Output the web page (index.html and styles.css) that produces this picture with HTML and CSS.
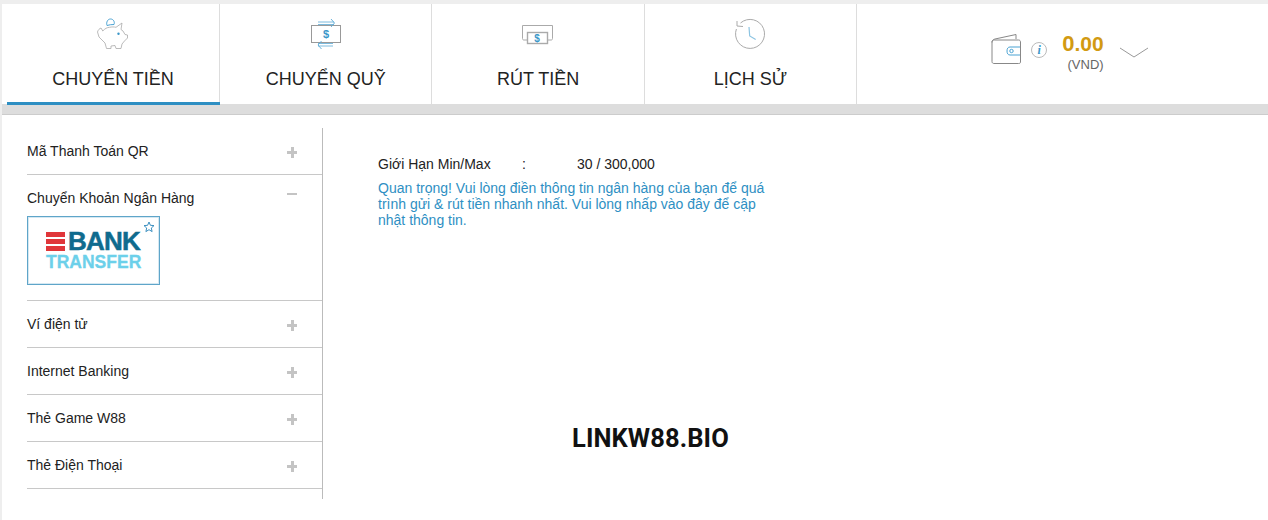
FILE: index.html
```html
<!DOCTYPE html>
<html lang="vi">
<head>
    <meta charset="UTF-8">
    <meta name="viewport" content="width=device-width, initial-scale=1.0">
    <title>Chuyển Tiền</title>
    <link rel="stylesheet" href="styles.css">
</head>
<body>
<div class="page">
    <!-- Top tabs -->
    <div class="topbar">
        <a class="tab tab-first active">
            <svg class="tab-icon" width="34" height="34" viewBox="0 0 34 34" fill="none">
                <path d="M1.500 15C2 13 3.500 11.500 5 11L6.800 14C9 11.500 11 10.500 13.500 10.300C16 9.800 18 9.800 20 10.300L26 6L25 12.500L27 14L29 17.500L31.500 18V21L28.500 24L26 27L25 31.500H20L19 28.500L15 29L15 31.500H10.500L9 26L3 20Z" stroke="#aaa" stroke-width="0.800" stroke-linejoin="round"/>
                <path d="M11 8.500C10 5.500 11.500 2 14.500 2C17.500 2 19 5 18 7.500C15.500 7.500 13 7.800 11 8.500Z" stroke="#4ba3d3"/>
                <circle cx="22.500" cy="16.700" r="1.200" fill="#3b97c9"/>
            </svg>
            <span>CHUYỂN TIỀN</span>
        </a>
        <a class="tab">
            <svg class="tab-icon" width="34" height="34" viewBox="0 0 34 34" fill="none">
                <rect x="2.500" y="8.500" width="29" height="17" fill="#fff" stroke="#999"/>
                <path d="M9 5H25M9 7.500H25" stroke="#5aaad6" stroke-width="0.800"/>
                <path d="M22 2L25.500 6L22 10" stroke="#5aaad6" stroke-width="0.900"/>
                <path d="M9 26.500H24M9 29H24" stroke="#5aaad6" stroke-width="0.800"/>
                <path d="M12.500 24L9 28L12.500 32" stroke="#5aaad6" stroke-width="0.900"/>
                <text x="17" y="21" class="icon-dollar" text-anchor="middle">$</text>
            </svg>
            <span>CHUYỂN QUỸ</span>
        </a>
        <a class="tab">
            <svg class="tab-icon" width="34" height="34" viewBox="0 0 34 34" fill="none">
                <path d="M6 23H3C2 23 1.500 22.500 1.500 21.500V8.500H31.500V21.500C31.500 22.500 31 23 30 23H27" stroke="#aaa"/>
                <rect x="6.500" y="15.500" width="20" height="11" stroke="#aaa" stroke-width="1.400"/>
                <text x="16" y="25" class="icon-dollar icon-dollar-small" text-anchor="middle">$</text>
            </svg>
            <span>RÚT TIỀN</span>
        </a>
        <a class="tab">
            <svg class="tab-icon" width="34" height="34" viewBox="0 0 34 34" fill="none">
                <path d="M7.500 6A14.500 14.500 0 1 1 3.400 12" stroke="#aaa"/>
                <path d="M4 4V9L10 9.500" stroke="#aaa"/>
                <path d="M16 10L16.700 19L22.700 22.500" stroke="#8cc4e2" stroke-width="1.200"/>
            </svg>
            <span>LỊCH SỬ</span>
        </a>
        <div class="balance">
            <svg class="wallet" width="32" height="32" viewBox="0 0 32 32" fill="none">
                <path d="M2 9.500C2 7.500 3 6.500 5 6L26 1.500V6" stroke="#888"/>
                <path d="M2 9C2 7.500 3 7 4.500 7H28.500C30 7 30.500 8 30.500 9V29C30.500 30 30 30.500 28.500 30.500H4C3 30.500 2 30 2 28.500Z" stroke="#888"/>
                <path d="M30 14H20C18 14 17 15.500 17 18C17 20.500 18 22 20 22H30" stroke="#4ba3d3"/>
                <circle cx="21.500" cy="18" r="1.700" stroke="#4ba3d3"/>
            </svg>
            <span class="info-icon">i</span>
            <div class="amount">
                <strong>0<small>.00</small></strong>
                <span>(VND)</span>
            </div>
            <svg class="chevron" width="30" height="12" viewBox="0 0 30 12" fill="none">
                <path d="M1 1L15 10L29 1" stroke="#999"/>
            </svg>
        </div>
    </div>
    <div class="band"></div>

    <div class="content">
        <!-- Payment methods -->
        <ul class="methods">
            <li class="method"><span>Mã Thanh Toán QR</span><i class="plus"></i></li>
            <li class="method method-open">
                <div class="method-head"><span>Chuyển Khoản Ngân Hàng</span><i class="minus"></i></div>
                <div class="bank-logo">
                    <svg class="logo-star" width="12" height="12" viewBox="0 0 12 12" fill="none">
                        <path d="M6 1L7.400 4.300L11 4.600L8.300 7L9.100 10.600L6 8.700L2.900 10.600L3.700 7L1 4.600L4.600 4.300Z" stroke="#3b8fc0"/>
                    </svg>
                    <div class="logo-top">
                        <div class="logo-bars"><b></b><b></b><b></b></div>
                        <span>BANK</span>
                    </div>
                    <div class="logo-bottom">TRANSFER</div>
                </div>
            </li>
            <li class="method"><span>Ví điện tử</span><i class="plus"></i></li>
            <li class="method"><span>Internet Banking</span><i class="plus"></i></li>
            <li class="method"><span>Thẻ Game W88</span><i class="plus"></i></li>
            <li class="method"><span>Thẻ Điện Thoại</span><i class="plus"></i></li>
        </ul>

        <div class="detail">
            <div class="limit">
                <span class="limit-label">Giới Hạn Min/Max</span>
                <span class="limit-colon">:</span>
                <span>30 / 300,000</span>
            </div>
            <p class="notice">Quan trọng! Vui lòng điền thông tin ngân hàng của bạn để quá trình gửi &amp; rút tiền nhanh nhất. Vui lòng nhấp vào đây để cập nhật thông tin.</p>
            <div class="watermark">LINKW88.BIO</div>
        </div>
    </div>
</div>
</body>
</html>
```

FILE: styles.css
```css
* {
    box-sizing: border-box;
}
html, body {
    height: 100%;
}
body {
    margin: 0;
    padding: 4px 0 0 2px;
    background-color: #eee;
    font-family: 'Liberation Sans', Arial, sans-serif;
    font-size: 14px;
    color: #222;
    overflow: hidden;
}
.page {
    background: #fff;
    height: 516px;
}
.topbar {
    display: flex;
    height: 100px;
}
.tab {
    width: 212.4px;
    border-right: 1px solid #ddd;
    display: flex;
    flex-direction: column;
    align-items: center;
    padding-top: 13px;
    font-size: 18px;
    color: #222;
    position: relative;
}
.tab-first {
    width: 218px;
    padding-left: 5px;
}
.tab span {
    margin-top: 18px;
}
.tab.active::after {
    content: "";
    position: absolute;
    left: 5px;
    right: -1px;
    bottom: -1px;
    height: 3px;
    background-color: #2e8fc3;
}
.tab-icon {
    display: block;
}
.icon-dollar {
    font-size: 11px;
    font-weight: bold;
    fill: #3b97c9;
}
.icon-dollar-small {
    font-size: 10px;
}
.balance {
    flex: 1;
    display: flex;
    align-items: flex-start;
    padding: 29px 0 0 133px;
}
.wallet {
    margin-right: 9px;
}
.info-icon {
    width: 16px;
    height: 16px;
    margin: 9px 15px 0 0;
    border: 1px solid #bbb;
    border-radius: 50%;
    font: italic bold 12px/14px 'Liberation Serif', serif;
    text-align: center;
    color: #3b97c9;
}
.amount {
    display: flex;
    flex-direction: column;
    align-items: flex-end;
    line-height: 1;
}
.amount strong {
    font-size: 22px;
    color: #d29a12;
}
.amount small {
    font-size: 21px;
}
.amount span {
    margin-top: 3px;
    font-size: 13px;
    color: #666;
}
.chevron {
    margin: 14px 0 0 15px;
}
.band {
    height: 11px;
    background-color: #ddd;
    border-bottom: 1px solid #ccc;
}
.content {
    display: flex;
    padding: 13px 0 0 25px;
}
.methods {
    list-style: none;
    margin: 0;
    padding: 0;
    width: 296px;
    height: 371px;
    border-right: 1px solid #bbb;
}
.method {
    display: flex;
    justify-content: space-between;
    align-items: center;
    height: 47px;
    padding-right: 25px;
    border-bottom: 1px solid #c8c8c8;
}
.method-open {
    display: block;
    height: 126px;
    padding: 0;
}
.method-head {
    display: flex;
    justify-content: space-between;
    padding: 15px 25px 0 0;
}
.plus, .minus {
    width: 10px;
    height: 11px;
    position: relative;
    display: block;
}
.plus {
    margin-top: 3px;
}
.plus::before, .minus::before {
    content: "";
    position: absolute;
    left: 0;
    top: 4px;
    width: 10px;
    height: 3px;
    background-color: #c4c4c4;
}
.minus::before {
    top: 3px;
    height: 2px;
}
.plus::after {
    content: "";
    position: absolute;
    left: 4px;
    top: 0;
    width: 3px;
    height: 11px;
    background-color: #c4c4c4;
}
.bank-logo {
    width: 133px;
    height: 69px;
    margin-top: 10px;
    border: 1px solid #5fa5c9;
    box-shadow: inset 0 0 0 1px #d5e8f2;
    padding: 15px 0 0 18px;
    position: relative;
}
.logo-star {
    position: absolute;
    top: 4px;
    right: 4px;
}
.logo-top {
    display: flex;
    align-items: center;
    gap: 3px;
    height: 19px;
}
.logo-top span {
    font-size: 26px;
    line-height: 19px;
    font-weight: bold;
    letter-spacing: -0.8px;
    -webkit-text-stroke: 0.5px #0f6b8e;
    color: #0f6b8e;
}
.logo-bars {
    display: flex;
    flex-direction: column;
    gap: 2px;
    width: 19px;
}
.logo-bars b {
    height: 5px;
    background-color: #e0363a;
}
.logo-bottom {
    margin-top: 2px;
    font-size: 17.5px;
    line-height: 18px;
    font-weight: bold;
    -webkit-text-stroke: 0.3px #6cd0ea;
    color: #6cd0ea;
}
.detail {
    padding: 27px 0 0 55px;
    width: 450px;
    position: relative;
}
.limit {
    display: flex;
    line-height: 18px;
}
.limit-label {
    width: 144px;
}
.limit-colon {
    width: 55px;
}
.notice {
    margin: 7px 0 0;
    width: 392px;
    line-height: 16px;
    color: #2e8fc3;
}
.watermark {
    margin: 195px 0 0 194px;
    font-family: Roboto, 'Liberation Sans', sans-serif;
    font-size: 25.5px;
    letter-spacing: 0.1px;
    font-weight: bold;
    color: #111;
    white-space: nowrap;
}
```
